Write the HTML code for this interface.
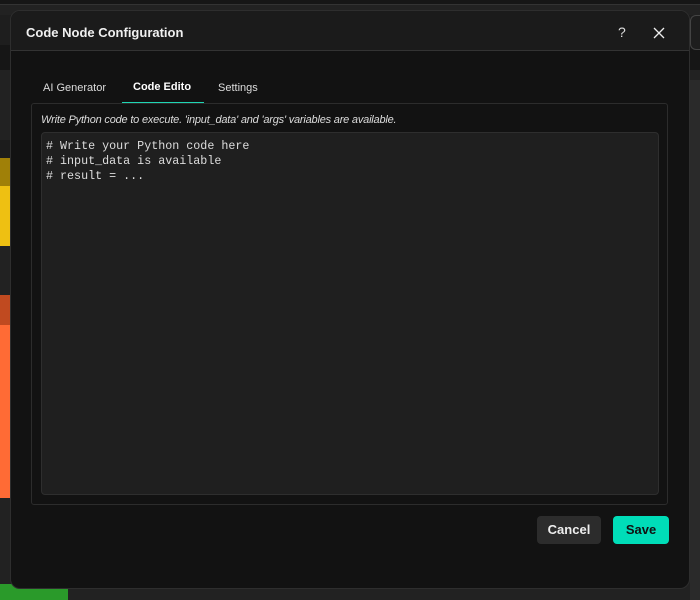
<!DOCTYPE html>
<html><head><style>
*{margin:0;padding:0;box-sizing:border-box}
body{width:700px;height:600px;background:#222;position:relative;overflow:hidden;font-family:"Liberation Sans",sans-serif}
.a{position:absolute}
</style></head><body>
<div class="a" style="left:0;top:0;width:700px;height:4px;background:#161616"></div>
<div class="a" style="left:0;top:4px;width:700px;height:1px;background:#333"></div>
<div class="a" style="left:0;top:15px;width:700px;height:30px;background:#1e1e1e"></div>
<div class="a" style="left:0;top:45px;width:700px;height:25px;background:#161616"></div>
<div class="a" style="left:0;top:140px;width:12px;height:18px;background:#1c1c1c"></div>
<div class="a" style="left:0;top:158px;width:12px;height:28px;background:#a08008"></div>
<div class="a" style="left:0;top:186px;width:12px;height:60px;background:#eec012"></div>
<div class="a" style="left:0;top:295px;width:12px;height:30px;background:#c04a20"></div>
<div class="a" style="left:0;top:325px;width:12px;height:173px;background:#ff6b35"></div>
<div class="a" style="left:0;top:584px;width:68px;height:16px;background:#2a9a2a"></div>
<div class="a" style="left:690px;top:15px;width:10px;height:35px;border:1px solid #444;border-right:none;border-radius:6px 0 0 6px;background:#1e1e1e"></div>
<div class="a" style="left:690px;top:80px;width:10px;height:520px;background:#2a2a2a"></div>
<div class="a" style="left:10px;top:10px;width:680px;height:579px;background:#121212;border:1px solid #2e2e2e;border-radius:10px;overflow:hidden">
 <div class="a" style="left:0;top:0;width:680px;height:40px;background:#1b1b1b;border-bottom:1px solid #333"></div>
 <div class="a" style="left:15px;top:14px;color:#f0f0f0;font-weight:bold;font-size:13px">Code Node Configuration</div>
 <div class="a" style="left:607px;top:13px;color:#ddd;font-size:14px">?</div>
 <svg class="a" style="left:642px;top:16px" width="12" height="12"><path d="M1 1L11 11M11 1L1 11" stroke="#eee" stroke-width="1.3"/></svg>
 <div class="a" style="left:32px;top:71px;color:#ddd;font-size:11px">AI Generator</div>
 <div class="a" style="left:122px;top:70px;color:#fff;font-size:11px;font-weight:bold">Code Edito</div>
 <div class="a" style="left:111px;top:91px;width:82px;height:2px;background:#1fd6b4"></div>
 <div class="a" style="left:207px;top:71px;color:#ddd;font-size:11px">Settings</div>
 <div class="a" style="left:20px;top:92px;width:637px;height:402px;border:1px solid #2c2c2c;border-radius:3px"></div>
 <div class="a" style="left:30px;top:103px;color:#ddd;font-size:11px;font-style:italic;letter-spacing:-0.2px">Write Python code to execute. 'input_data' and 'args' variables are available.</div>
 <div class="a" style="left:30px;top:121px;width:618px;height:363px;background:#1f1f1f;border:1px solid #2e2e2e;border-radius:4px;padding:6px 4px;font-family:'Liberation Mono',monospace;font-size:11.7px;line-height:15px;color:#ddd;white-space:pre"># Write your Python code here
# input_data is available
# result = ...</div>
 <div class="a" style="left:526px;top:505px;width:64px;height:28px;background:#2c2c2c;border-radius:4px;color:#eee;font-weight:bold;font-size:13px;text-align:center;line-height:28px">Cancel</div>
 <div class="a" style="left:602px;top:505px;width:56px;height:28px;background:#00ddb8;border-radius:4px;color:#111;font-weight:bold;font-size:13px;text-align:center;line-height:28px">Save</div>
</div>
</body></html>
